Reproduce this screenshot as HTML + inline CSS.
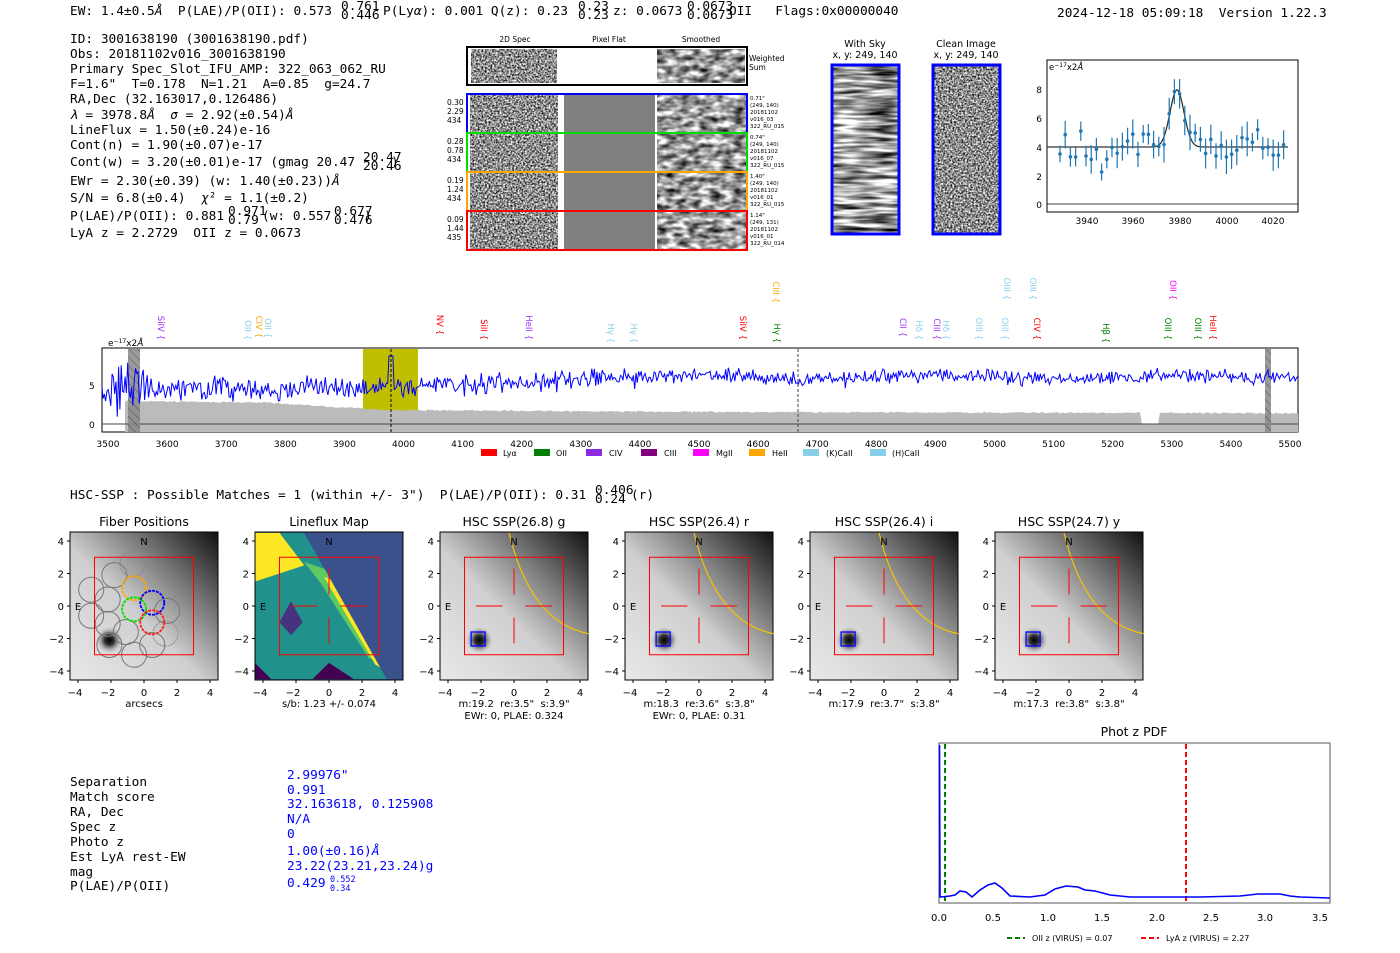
<!DOCTYPE html>
<html><head><meta charset="utf-8">
<style>
html,body{margin:0;padding:0;background:#fff;}
svg{display:block}
text{white-space:pre}
.m{font-family:"DejaVu Sans Mono","Liberation Mono",monospace;font-size:12.8px;fill:#000}
.s{font-family:"DejaVu Sans","Liberation Sans",sans-serif;fill:#000}
.b{fill:#0000ff}
</style></head>
<body>
<svg id="S" width="1400" height="953" viewBox="0 0 1400 953" xmlns="http://www.w3.org/2000/svg" xml:space="preserve">
<defs>
 <filter id="n1" x="0" y="0" width="100%" height="100%"><feTurbulence type="fractalNoise" baseFrequency="0.55" numOctaves="2" seed="3"/><feColorMatrix type="matrix" values="0 0 0 0 0  0 0 0 0 0  0 0 0 0 0  0 0 0 -1.8 1.35"/><feComposite in2="SourceGraphic" operator="in"/></filter>
 <filter id="n2" x="0" y="0" width="100%" height="100%"><feTurbulence type="fractalNoise" baseFrequency="0.09 0.18" numOctaves="2" seed="7"/><feColorMatrix type="matrix" values="0 0 0 0 0  0 0 0 0 0  0 0 0 0 0  0 0 0 -1.6 1.2"/><feComposite in2="SourceGraphic" operator="in"/></filter>
 <filter id="n3" x="0" y="0" width="100%" height="100%"><feTurbulence type="fractalNoise" baseFrequency="0.03 0.25" numOctaves="2" seed="2"/><feColorMatrix type="matrix" values="0 0 0 0 0  0 0 0 0 0  0 0 0 0 0  0 0 0 -2 1.4"/><feComposite in2="SourceGraphic" operator="in"/></filter>
 <linearGradient id="gal" x1="0" y1="1" x2="1" y2="0"><stop offset="0" stop-color="#e8e8e8"/><stop offset="0.45" stop-color="#cfcfcf"/><stop offset="0.7" stop-color="#7a7a7a"/><stop offset="1" stop-color="#111"/></linearGradient>
 <radialGradient id="star"><stop offset="0" stop-color="#000"/><stop offset="0.35" stop-color="#333"/><stop offset="1" stop-color="#ccc" stop-opacity="0"/></radialGradient>
 <pattern id="hatch" width="6" height="6" patternUnits="userSpaceOnUse" patternTransform="rotate(-45)"><rect width="6" height="6" fill="#888"/><line x1="0" y1="0" x2="0" y2="6" stroke="#333" stroke-width="1"/></pattern>
</defs>

<text class="m" x="70" y="15">EW: 1.4±0.5<tspan font-style="italic">Å</tspan>  P(LAE)/P(OII): 0.573</text>
<text class="m" x="341" y="10" font-size="8.5">0.761</text><text class="m" x="341" y="19" font-size="8.5">0.446</text>
<text class="m" x="383" y="15">P(Ly<tspan font-style="italic">α</tspan>): 0.001 Q(z): 0.23</text>
<text class="m" x="578" y="10" font-size="8.5">0.23</text><text class="m" x="578" y="19" font-size="8.5">0.23</text>
<text class="m" x="613" y="15">z: 0.0673</text>
<text class="m" x="687" y="10" font-size="8.5">0.0673</text><text class="m" x="687" y="19" font-size="8.5">0.0673</text>
<text class="m" x="729" y="15">OII   Flags:0x00000040</text>
<text class="m" x="1057" y="17">2024-12-18 05:09:18  Version 1.22.3</text>

<g class="m">
<text x="70" y="43">ID: 3001638190 (3001638190.pdf)</text>
<text x="70" y="58">Obs: 20181102v016_3001638190</text>
<text x="70" y="73">Primary Spec_Slot_IFU_AMP: 322_063_062_RU</text>
<text x="70" y="88">F=1.6"  T=0.178  N=1.21  A=0.85  g=24.7</text>
<text x="70" y="103">RA,Dec (32.163017,0.126486)</text>
<text x="70" y="119"><tspan font-style="italic">λ</tspan> = 3978.8<tspan font-style="italic">Å</tspan>  <tspan font-style="italic">σ</tspan> = 2.92(±0.54)<tspan font-style="italic">Å</tspan></text>
<text x="70" y="134">LineFlux = 1.50(±0.24)e-16</text>
<text x="70" y="149">Cont(n) = 1.90(±0.07)e-17</text>
<text x="70" y="166">Cont(w) = 3.20(±0.01)e-17 (gmag 20.47</text><text x="391" y="166">)</text>
<text x="70" y="185">EWr = 2.30(±0.39) (w: 1.40(±0.23))<tspan font-style="italic">Å</tspan></text>
<text x="70" y="202">S/N = 6.8(±0.4)  <tspan font-style="italic">χ</tspan>² = 1.1(±0.2)</text>
<text x="70" y="220">P(LAE)/P(OII): 0.881</text><text x="262" y="220">(w: 0.557</text><text x="364" y="220">)</text>
<text x="70" y="237">LyA z = 2.2729  OII z = 0.0673</text>
</g>
<g class="m" font-size="8.5">
<text x="363" y="161">20.47</text><text x="363" y="170">20.46</text>
<text x="228" y="215">0.971</text><text x="228" y="224">0.79</text>
<text x="334" y="215">0.677</text><text x="334" y="224">0.476</text>
</g>

<g class="s" font-size="7.5" text-anchor="middle">
<text x="515" y="42">2D Spec</text><text x="609" y="42">Pixel Flat</text><text x="701" y="42">Smoothed</text>
</g>
<rect x="467" y="47" width="280" height="38" fill="#fff" stroke="#000" stroke-width="2"/>
<rect x="471" y="49" width="86" height="34" fill="#aaa" filter="url(#n1)"/>
<rect x="657" y="49" width="88" height="34" fill="#aaa" filter="url(#n2)"/>
<text class="s" font-size="7.5" x="749" y="61">Weighted</text><text class="s" font-size="7.5" x="749" y="70">Sum</text>
<g id="rows"></g>

<g class="s" font-size="9.5" text-anchor="middle">
<text x="865" y="47">With Sky</text><text x="865" y="58">x, y: 249, 140</text>
<text x="966" y="47">Clean Image</text><text x="966" y="58">x, y: 249, 140</text>
</g>
<rect x="832" y="65" width="67" height="169" fill="#999" filter="url(#n3)"/>
<rect x="832" y="65" width="67" height="169" fill="none" stroke="#0000ff" stroke-width="3"/>
<rect x="933" y="65" width="67" height="169" fill="#aaa" filter="url(#n1)"/>
<rect x="933" y="65" width="67" height="169" fill="none" stroke="#0000ff" stroke-width="3"/>

<rect x="1047" y="60" width="251" height="152" fill="none" stroke="#000" stroke-width="1"/>
<text class="s" font-size="8.5" x="1049" y="70">e<tspan font-size="6" dy="-3">−17</tspan><tspan dy="3">x2</tspan><tspan font-style="italic">Å</tspan></text>
<line x1="1047" y1="204" x2="1298" y2="204" stroke="#000" stroke-width="0.8"/>
<g class="s" font-size="9" text-anchor="end">
<text x="1042" y="93">8</text><text x="1042" y="122">6</text><text x="1042" y="151">4</text><text x="1042" y="180">2</text><text x="1042" y="208">0</text>
</g>
<g class="s" font-size="9" text-anchor="middle">
<text x="1087" y="224">3940</text><text x="1133" y="224">3960</text><text x="1180" y="224">3980</text><text x="1227" y="224">4000</text><text x="1273" y="224">4020</text>
</g>
<g id="fit"></g>

<rect x="102" y="348" width="1196" height="84" fill="#fff" stroke="#000" stroke-width="1"/>
<rect x="363" y="349" width="55" height="83" fill="#bfbf00"/>
<path id="grey" fill="#bbb"/>
<line x1="102" y1="424" x2="1298" y2="424" stroke="#444" stroke-width="1"/>
<rect x="128" y="349" width="12" height="83" fill="url(#hatch)" opacity="0.85"/>
<rect x="1265" y="349" width="6" height="83" fill="url(#hatch)" opacity="0.85"/>
<path id="spec" fill="none" stroke="#0000ff" stroke-width="1"/>
<line x1="391" y1="349" x2="391" y2="432" stroke="#000" stroke-width="1" stroke-dasharray="3,2"/>
<line x1="798" y1="349" x2="798" y2="432" stroke="#444" stroke-width="1" stroke-dasharray="3,2"/>
<text class="s" font-size="9" x="108" y="346">e<tspan font-size="6" dy="-3">−17</tspan><tspan dy="3">x2</tspan><tspan font-style="italic">Å</tspan></text>
<text class="s" font-size="9" x="89" y="389">5</text><text class="s" font-size="9" x="89" y="428">0</text>
<g id="xt" class="s" font-size="9" text-anchor="middle"></g>
<g id="ll" class="s" font-size="8.5"></g>
<g class="s" font-size="8">
<rect x="481" y="449" width="16" height="7" fill="#ff0000"/><text x="503" y="456">Lyα</text>
<rect x="534" y="449" width="16" height="7" fill="#008000"/><text x="556" y="456">OII</text>
<rect x="586" y="449" width="16" height="7" fill="#8a2be2"/><text x="609" y="456">CIV</text>
<rect x="641" y="449" width="16" height="7" fill="#800080"/><text x="664" y="456">CIII</text>
<rect x="693" y="449" width="16" height="7" fill="#ff00ff"/><text x="716" y="456">MgII</text>
<rect x="749" y="449" width="16" height="7" fill="#ffa500"/><text x="772" y="456">HeII</text>
<rect x="803" y="449" width="16" height="7" fill="#87ceeb"/><text x="826" y="456">(K)CaII</text>
<rect x="870" y="449" width="16" height="7" fill="#87ceeb"/><text x="892" y="456">(H)CaII</text>
</g>

<text class="m" x="70" y="499">HSC-SSP : Possible Matches = 1 (within +/- 3")  P(LAE)/P(OII): 0.31</text>
<text class="m" x="595" y="494" font-size="8.5">0.406</text><text class="m" x="595" y="503" font-size="8.5">0.24</text>
<text class="m" x="631" y="499">(r)</text>

<g id="cut"></g>

<g class="m">
<text x="70" y="786">Separation</text><text x="70" y="801">Match score</text><text x="70" y="816">RA, Dec</text><text x="70" y="831">Spec z</text><text x="70" y="846">Photo z</text><text x="70" y="861">Est LyA rest-EW</text><text x="70" y="876">mag</text><text x="70" y="890">P(LAE)/P(OII)</text>
</g>
<g class="m b">
<text x="287" y="779">2.99976"</text><text x="287" y="794">0.991</text><text x="287" y="808">32.163618, 0.125908</text><text x="287" y="823">N/A</text><text x="287" y="838">0</text><text x="287" y="855">1.00(±0.16)<tspan font-style="italic">Å</tspan></text><text x="287" y="870">23.22(23.21,23.24)g</text><text x="287" y="887">0.429</text>
<text x="330" y="882" font-size="8.5">0.552</text><text x="330" y="891" font-size="8.5">0.34</text>
</g>

<text class="s" font-size="12.5" x="1134" y="736" text-anchor="middle">Phot z PDF</text>
<rect x="939" y="743" width="391" height="160" fill="none" stroke="#555" stroke-width="1"/>
<line x1="945" y1="744" x2="945" y2="903" stroke="#008000" stroke-width="2" stroke-dasharray="5,3"/>
<line x1="1186" y1="744" x2="1186" y2="903" stroke="#ff0000" stroke-width="2" stroke-dasharray="5,3"/>
<polyline fill="none" stroke="#0000ff" stroke-width="1.6" points="939.5,745 940,897 950,896 955,895 960,891 966,892 972,897 980,890 988,885 995,883 1002,888 1010,896 1030,897 1045,895 1055,889 1066,886 1078,887 1085,890 1095,891 1110,895 1130,897 1200,897 1240,896 1258,894 1280,894 1290,896 1300,897 1330,898"/>
<g class="s" font-size="10" text-anchor="middle">
<text x="939" y="921">0.0</text><text x="993" y="921">0.5</text><text x="1048" y="921">1.0</text><text x="1102" y="921">1.5</text><text x="1157" y="921">2.0</text><text x="1211" y="921">2.5</text><text x="1265" y="921">3.0</text><text x="1320" y="921">3.5</text>
</g>
<g class="s" font-size="8">
<line x1="1007" y1="938" x2="1025" y2="938" stroke="#008000" stroke-width="2" stroke-dasharray="5,3"/><text x="1032" y="941">OII z (VIRUS) = 0.07</text>
<line x1="1141" y1="938" x2="1159" y2="938" stroke="#ff0000" stroke-width="2" stroke-dasharray="5,3"/><text x="1166" y="941">LyA z (VIRUS) = 2.27</text>
</g>
</svg>
<script>
(function(){
var NS="http://www.w3.org/2000/svg";
function el(p,t,a,txt){var e=document.createElementNS(NS,t);for(var k in a)e.setAttribute(k,a[k]);if(txt!=null)e.textContent=txt;p.appendChild(e);return e;}
var seed=12345;function r(){seed=(seed*16807)%2147483647;return seed/2147483647;}
function g(){return (r()+r()+r()-1.5)/0.87;}
var rows=document.getElementById('rows');
var cols=['#0000ff','#00e000','#ffa500','#ff0000'],ys=[95,134,173,212];
var lefts=[['0.30','2.29','434'],['0.28','0.78','434'],['0.19','1.24','434'],['0.09','1.44','435']];
var rt=[['0.71"','(249, 140)','20181102','v016_03','322_RU_015'],['0.74"','(249, 140)','20181102','v016_07','322_RU_015'],['1.40"','(249, 140)','20181102','v016_01','322_RU_015'],['1.14"','(249, 131)','20181102','v016_01','322_RU_014']];
for(var i=0;i<4;i++){var y=ys[i];
 el(rows,'rect',{x:470,y:y,width:88,height:38,fill:'#aaa',filter:'url(#n1)'});
 el(rows,'rect',{x:564,y:y,width:91,height:38,fill:'#808080'});
 el(rows,'rect',{x:657,y:y,width:89,height:38,fill:'#999',filter:'url(#n2)'});
 el(rows,'rect',{x:467,y:y-1,width:280,height:39,fill:'none',stroke:cols[i],'stroke-width':2});
 for(var j=0;j<3;j++)el(rows,'text',{x:447,y:y+10+j*9,'class':'s','font-size':7.5},lefts[i][j]);
 for(j=0;j<5;j++)el(rows,'text',{x:750,y:y+5+j*7,'class':'s','font-size':5.5},rt[i][j]);
}
var fit=document.getElementById('fit');
function gy(x){return 147-4*14.3*Math.exp(-Math.pow(x-1177,2)/(2*49));}
var pts=[];for(var x=1047;x<=1288;x+=1)pts.push(x+','+gy(x).toFixed(1));
el(fit,'polyline',{points:pts.join(' '),fill:'none',stroke:'#333','stroke-width':1.3});
for(x=1060;x<=1288;x+=5.2){var yv=gy(x)+g()*16;if(Math.abs(x-1177)<8)yv=gy(x)+g()*4;var e=8+r()*10;
 el(fit,'line',{x1:x,y1:yv-e,x2:x,y2:yv+e,stroke:'#1f77b4','stroke-width':1.2});
 el(fit,'circle',{cx:x,cy:yv,r:1.8,fill:'#1f77b4'});}
function X(w){return 108+(w-3500)*0.591;}
var d='M102,387';var w,yy;
for(x=103;x<=1298;x+=1.3){var base;
 if(x<420)base=389-(x-102)*0.003;else if(x<650)base=385-(x-420)*0.035;else base=377+Math.sin(x/40)*2;
 var amp=x<145?24:(x<420?10:(x<650?8:6));yy=base+g()*amp;if(Math.abs(x-391)<3)yy=356;
 yy=Math.max(350,Math.min(431,yy));d+=' L'+x.toFixed(1)+','+yy.toFixed(1);}
document.getElementById('spec').setAttribute('d',d);
var gd='M125,432 L125,402';
for(x=126;x<=1298;x+=2){var t;
 if(x<270)t=401+(x-126)*0.01;else if(x<390)t=403+(x-270)*0.06;else if(x<700)t=410+(x-390)*0.006;else t=412+(x-700)*0.002;
 if(x>1140&&x<1160)t=424;t+=g()*0.7;gd+=' L'+x+','+t.toFixed(1);}
gd+=' L1298,432 Z';document.getElementById('grey').setAttribute('d',gd);
var xt=document.getElementById('xt');
for(w=3500;w<=5500;w+=100){el(xt,'text',{x:X(w),y:447},String(w));}
var ll=document.getElementById('ll');
var L=[[161,340,'SiIV','#9b30ff'],[248,340,'OII','#87ceeb'],[259,338,'CIV','#ffa500'],[268,338,'OII','#87ceeb'],[440,335,'NV','#ff0000'],[484,340,'SiII','#ff0000'],[529,340,'HeII','#9b30ff'],[611,343,'Hγ','#87ceeb'],[634,343,'Hγ','#87ceeb'],[743,340,'SiIV','#ff0000'],[776,303,'CIII','#ffa500'],[777,343,'Hγ','#008000'],[903,337,'CII','#9b30ff'],[919,340,'Hδ','#87ceeb'],[937,340,'CIII','#9b30ff'],[946,340,'Hδ','#87ceeb'],[979,340,'OIII','#87ceeb'],[1005,340,'OIII','#87ceeb'],[1007,300,'OIII','#87ceeb'],[1033,300,'OIII','#87ceeb'],[1037,340,'CIV','#ff0000'],[1106,343,'Hβ','#008000'],[1168,340,'OIII','#008000'],[1173,300,'OII','#ff00ff'],[1198,340,'OIII','#008000'],[1213,340,'HeII','#ff0000']];
L.forEach(function(a){el(ll,'text',{x:a[0]-3,y:a[1],fill:a[3],transform:'rotate(90 '+(a[0]-3)+' '+a[1]+')','text-anchor':'end'},a[2]+' {');});
var cut=document.getElementById('cut');
var P=[[70,'Fiber Positions','arcsecs',''],[255,'Lineflux Map','s/b: 1.23 +/- 0.074',''],[440,'HSC SSP(26.8) g','m:19.2  re:3.5"  s:3.9"','EWr: 0, PLAE: 0.324'],[625,'HSC SSP(26.4) r','m:18.3  re:3.6"  s:3.8"','EWr: 0, PLAE: 0.31'],[810,'HSC SSP(26.4) i','m:17.9  re:3.7"  s:3.8"',''],[995,'HSC SSP(24.7) y','m:17.3  re:3.8"  s:3.8"','']];
P.forEach(function(p,k){var Lx=p[0];function cx(c){return Lx+74+c*16.5;}function cy(c){return 606-c*16.25;}
 el(cut,'text',{x:Lx+74,y:526,'class':'s','font-size':12.5,'text-anchor':'middle'},p[1]);
 if(k==1){el(cut,'rect',{x:Lx,y:532,width:148,height:148,fill:'#3b518b'});
  el(cut,'polygon',{points:cx(-4.5)+','+cy(4.5)+' '+cx(-1.5)+','+cy(4.5)+' '+cx(3.5)+','+cy(-4.5)+' '+cx(-4.5)+','+cy(-4.5),fill:'#21918c'});
  el(cut,'polygon',{points:cx(-4.5)+','+cy(4.5)+' '+cx(-3)+','+cy(4.5)+' '+cx(-1.5)+','+cy(2.5)+' '+cx(-4.5)+','+cy(1.5),fill:'#fde725'});
  el(cut,'polygon',{points:cx(-1.5)+','+cy(2.7)+' '+cx(0)+','+cy(2.2)+' '+cx(3.2)+','+cy(-3.5)+' '+cx(2.4)+','+cy(-3.2)+' '+cx(-0.5)+','+cy(1.4),fill:'#5ec962'});
  el(cut,'polygon',{points:cx(-0.3)+','+cy(1.8)+' '+cx(0.2)+','+cy(1.6)+' '+cx(3.3)+','+cy(-3.9)+' '+cx(2.8)+','+cy(-3.6),fill:'#fde725'});
  el(cut,'polygon',{points:cx(-1.5)+','+cy(4.5)+' '+cx(4.5)+','+cy(4.5)+' '+cx(4.5)+','+cy(-4.5)+' '+cx(3.5)+','+cy(-4.5),fill:'#3b518b'});
  el(cut,'polygon',{points:cx(-4.5)+','+cy(-3.5)+' '+cx(-3.5)+','+cy(-4.5)+' '+cx(-4.5)+','+cy(-4.5),fill:'#440154'});
  el(cut,'polygon',{points:cx(-1)+','+cy(-4.5)+' '+cx(0)+','+cy(-3.5)+' '+cx(1.5)+','+cy(-4.5),fill:'#440154'});
  el(cut,'polygon',{points:cx(-3)+','+cy(-1)+' '+cx(-2.3)+','+cy(0.3)+' '+cx(-1.6)+','+cy(-1)+' '+cx(-2.3)+','+cy(-1.8),fill:'#46337e'});
 }else{el(cut,'rect',{x:Lx,y:532,width:148,height:148,fill:'url(#gal)'});
  el(cut,'circle',{cx:cx(-2.1),cy:cy(-2.1),r:14,fill:'url(#star)'});}
 el(cut,'rect',{x:Lx,y:532,width:148,height:148,fill:'none',stroke:'#000','stroke-width':1});
 if(k==0){var gr=[[-0.7,2.6,1],[-1.8,1.9,0],[-3.2,1.0,0],[-2.2,0.4,0],[-3.2,-0.6,0],[-2.2,-1.1,0],[-2.1,-2.4,0],[-0.6,-3.0,0],[0.5,-2.4,0],[1.3,-1.7,1],[-1.1,-1.6,0],[1.4,-0.3,0]];
  gr.forEach(function(c){el(cut,'circle',{cx:cx(c[0]),cy:cy(c[1]),r:12.5,fill:'none',stroke:c[2]?'#888':'#777','stroke-width':1,'stroke-dasharray':c[2]?'2,1':''});});
  [[-0.6,1.1,'#ffa500'],[0.5,0.2,'#0000ff'],[-0.6,-0.2,'#00e000'],[0.5,-1.0,'#ff2020']].forEach(function(c){el(cut,'circle',{cx:cx(c[0]),cy:cy(c[1]),r:12,fill:'none',stroke:c[2],'stroke-width':1.8,'stroke-dasharray':'3,1'});});
 }
 if(k>=2){el(cut,'path',{d:'M'+cx(-0.3)+','+cy(4.5)+' Q'+cx(1)+','+cy(-1)+' '+cx(4.5)+','+cy(-1.7),fill:'none',stroke:'#f5c400','stroke-width':1.2});
  el(cut,'rect',{x:cx(-2.6),y:cy(-1.6),width:14,height:14,fill:'none',stroke:'#0000ff','stroke-width':1.3});}
 el(cut,'rect',{x:cx(-3),y:cy(3),width:99,height:97.5,fill:'none',stroke:'#ff0000','stroke-width':1});
 if(k>=1){var R='#ff0000';
  el(cut,'line',{x1:cx(-2.3),y1:cy(0),x2:cx(-0.7),y2:cy(0),stroke:R,'stroke-width':1});
  el(cut,'line',{x1:cx(0.7),y1:cy(0),x2:cx(2.3),y2:cy(0),stroke:R,'stroke-width':1});
  el(cut,'line',{x1:cx(0),y1:cy(2.3),x2:cx(0),y2:cy(0.7),stroke:R,'stroke-width':1});
  el(cut,'line',{x1:cx(0),y1:cy(-0.7),x2:cx(0),y2:cy(-2.3),stroke:R,'stroke-width':1});}
 el(cut,'text',{x:cx(0),y:cy(4)+4,fill:'#ff0000','class':'s','font-size':10,'text-anchor':'middle'},'N');
 el(cut,'text',{x:cx(-4),y:cy(0)+4,fill:'#ff0000','class':'s','font-size':10,'text-anchor':'middle'},'E');
 [4,2,0,-2,-4].forEach(function(v){el(cut,'text',{x:Lx-6,y:cy(v)+4,'class':'s','font-size':10,'text-anchor':'end'},v<0?'−'+(-v):String(v));
  el(cut,'line',{x1:Lx-3,y1:cy(v),x2:Lx,y2:cy(v),stroke:'#000'});
  el(cut,'text',{x:cx(v)-(v<0?3:0),y:696,'class':'s','font-size':10,'text-anchor':'middle'},v<0?'−'+(-v):String(v));
  el(cut,'line',{x1:cx(v),y1:680,x2:cx(v),y2:683,stroke:'#000'});});
 el(cut,'text',{x:Lx+74,y:707,'class':'s','font-size':10,'text-anchor':'middle'},p[2]);
 if(p[3])el(cut,'text',{x:Lx+74,y:719,'class':'s','font-size':10,'text-anchor':'middle'},p[3]);
});
})();
</script>
</body></html>
